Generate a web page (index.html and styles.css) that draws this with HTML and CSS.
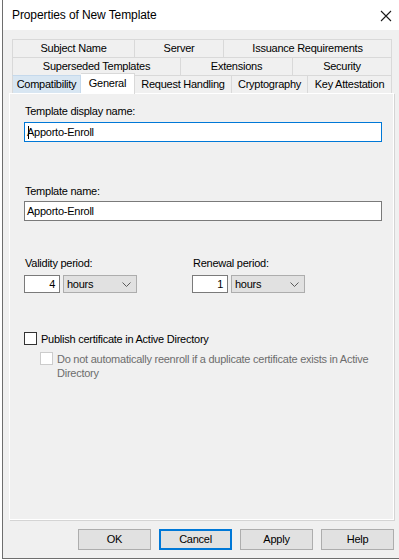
FILE: index.html
```html
<!DOCTYPE html>
<html lang="en">
<head>
  <meta charset="UTF-8">
  <title>Properties of New Template</title>
  <link rel="stylesheet" href="styles.css">
</head>
<body>
  <div class="window">
    <div class="titlebar">
      <span class="title">Properties of New Template</span>
      <svg class="close" width="12" height="12" viewBox="0 0 12 12">
        <path d="M1 1 L11 11 M11 1 L1 11" stroke="#1a1a1a" stroke-width="1.1" fill="none"/>
      </svg>
    </div>

    <div class="dialog">
      <div class="tabs">
        <div class="tab-row">
          <div class="tab" style="width: 123px">Subject Name</div>
          <div class="tab" style="width: 89px">Server</div>
          <div class="tab grow">Issuance Requirements</div>
        </div>
        <div class="tab-row">
          <div class="tab" style="width: 169px">Superseded Templates</div>
          <div class="tab" style="width: 112px">Extensions</div>
          <div class="tab grow">Security</div>
        </div>
        <div class="tab-row">
          <div class="tab hover" style="width: 69px">Compatibility</div>
          <div class="tab active" style="width: 54px">General</div>
          <div class="tab" style="width: 97px">Request Handling</div>
          <div class="tab" style="width: 76px">Cryptography</div>
          <div class="tab grow">Key Attestation</div>
        </div>
      </div>

      <div class="panel">
        <div class="label first">Template display name:</div>
        <div class="field focused"><span class="caret"></span>Apporto-Enroll</div>

        <div class="label second">Template name:</div>
        <div class="field">Apporto-Enroll</div>

        <div class="periods">
          <div class="period">
            <div class="label">Validity period:</div>
            <div class="period-row">
              <div class="num">4</div>
              <div class="combo">hours
                <svg width="9" height="5" viewBox="0 0 9 5"><path d="M0.5 0.5 L4.5 4.5 L8.5 0.5" stroke="#5a5a5a" fill="none"/></svg>
              </div>
            </div>
          </div>
          <div class="period">
            <div class="label">Renewal period:</div>
            <div class="period-row">
              <div class="num">1</div>
              <div class="combo">hours
                <svg width="9" height="5" viewBox="0 0 9 5"><path d="M0.5 0.5 L4.5 4.5 L8.5 0.5" stroke="#5a5a5a" fill="none"/></svg>
              </div>
            </div>
          </div>
        </div>

        <div class="check">
          <span class="box"></span>
          <span>Publish certificate in Active Directory</span>
        </div>
        <div class="check sub disabled">
          <span class="box"></span>
          <span>Do not automatically reenroll if a duplicate certificate exists in Active Directory</span>
        </div>
      </div>

      <div class="buttons">
        <div class="btn">OK</div>
        <div class="btn default">Cancel</div>
        <div class="btn">Apply</div>
        <div class="btn">Help</div>
      </div>
    </div>
  </div>
</body>
</html>
```

FILE: styles.css
```css
body {
  margin: 0;
  background: #fff;
  font-family: "Liberation Sans", Arial, sans-serif;
  font-size: 11px;
  letter-spacing: -0.25px;
  color: #000;
}

.window {
  margin-left: 2px;
  width: 396px;
  height: 558px;
  border-left: 1px solid #6e6e6e;
  border-bottom: 1px solid #6e6e6e;
  background: #f0f0f0;
  display: flex;
  flex-direction: column;
}

.titlebar {
  height: 30px;
  background: #fff;
  display: flex;
  align-items: center;
  justify-content: space-between;
  padding: 0 7px 0 9px;
}

.title {
  font-size: 12px;
  letter-spacing: -0.1px;
  line-height: 30px;
}

.close {
  margin-top: 1px;
}

.dialog {
  flex: 1;
  padding: 9px 5px 0 6px;
  display: flex;
  flex-direction: column;
}

.tabs {
  margin: 0 2px 0 3px;
}

.tab-row {
  display: flex;
  height: 18px;
}

.tab {
  box-sizing: border-box;
  height: 18px;
  border: 1px solid #d9d9d9;
  border-left: none;
  border-bottom: none;
  text-align: center;
  line-height: 17px;
  white-space: nowrap;
}

.tab-row .tab:first-child {
  border-left: 1px solid #d9d9d9;
}

.tab.grow {
  flex: 1;
}

.tab.hover {
  background: #d8e6f2;
  border-color: #c5d9ec;
}

.tab.active {
  background: #fff;
  height: 21px;
  margin-top: -2px;
  line-height: 19px;
  position: relative;
  z-index: 1;
  border-color: #d9d9d9;
}

.panel {
  box-sizing: border-box;
  height: 427px;
  background: #f0f0f0;
  border: 1px solid #fff;
  box-shadow: 1px 1px 0 #d4d4d4;
  padding: 10px 11px 0 14px;
}

.label {
  line-height: 15px;
  padding-left: 1px;
}

.label.first {
  margin-bottom: 3px;
}

.label.second {
  margin-top: 42px;
  margin-bottom: 2px;
}

.field {
  box-sizing: border-box;
  height: 20px;
  background: #fff;
  border: 1px solid #7a7a7a;
  padding-left: 2px;
  line-height: 18px;
  position: relative;
}

.field.focused {
  border-color: #0078d7;
}

.caret {
  position: absolute;
  left: 3px;
  top: 3px;
  width: 1px;
  height: 13px;
  background: #000;
}

.periods {
  display: flex;
  margin-top: 35px;
}

.period {
  width: 168px;
}

.period .label {
  margin-bottom: 4px;
}

.period-row {
  display: flex;
  gap: 3px;
}

.num {
  box-sizing: border-box;
  width: 36px;
  height: 18px;
  background: #fff;
  border: 1px solid #7a7a7a;
  text-align: right;
  padding-right: 4px;
  line-height: 16px;
}

.combo {
  box-sizing: border-box;
  width: 74px;
  height: 18px;
  background: #e1e1e1;
  border: 1px solid #adadad;
  padding: 0 5px 0 3px;
  line-height: 16px;
  display: flex;
  justify-content: space-between;
  align-items: center;
}

.check {
  display: flex;
  align-items: flex-start;
  gap: 4px;
  line-height: 14px;
  margin-top: 39px;
}

.box {
  box-sizing: border-box;
  flex: none;
  width: 13px;
  height: 13px;
  background: #fff;
  border: 1px solid #333;
}

.check.sub {
  margin-top: 6px;
  margin-left: 16px;
}

.check.disabled {
  color: #6d6d6d;
}

.check.disabled .box {
  border-color: #cccccc;
}

.buttons {
  display: flex;
  justify-content: flex-end;
  gap: 8px;
  margin-top: 9px;
}

.btn {
  box-sizing: border-box;
  width: 73px;
  height: 21px;
  background: #e1e1e1;
  border: 1px solid #adadad;
  text-align: center;
  line-height: 19px;
}

.btn.default {
  border: 2px solid #0078d7;
  line-height: 17px;
}
```
